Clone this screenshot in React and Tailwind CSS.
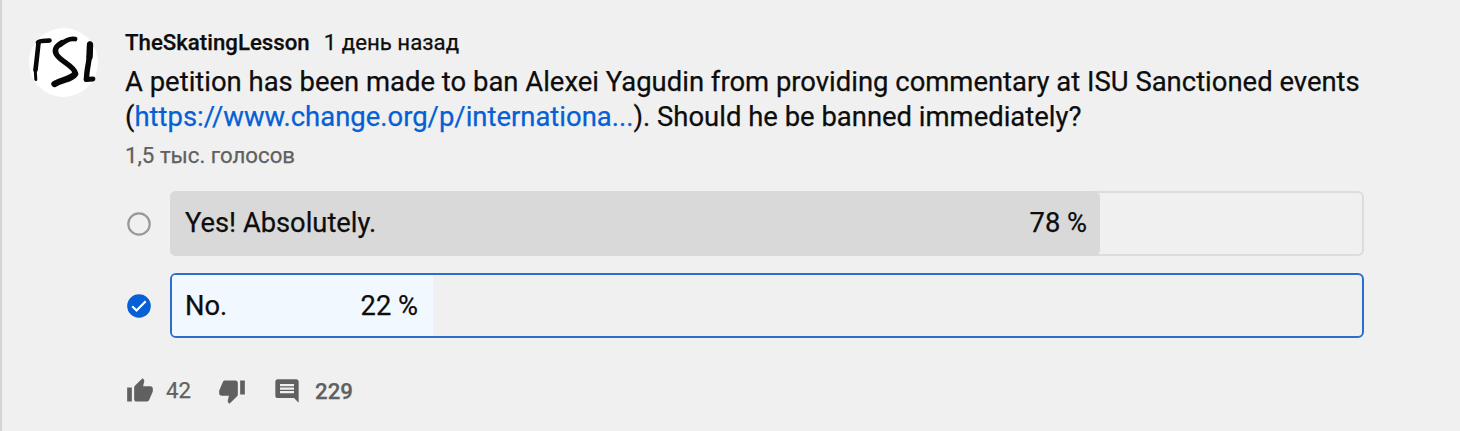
const LIKE =
  "M1 21h4V9H1v12zm22-11c0-1.100-.900-2-2-2h-6.310l.950-4.570.030-.320c0-.410-.170-.790-.440-1.060L14.170 1 7.590 7.590C7.220 7.950 7 8.450 7 9v10c0 1.100.900 2 2 2h9c.830 0 1.540-.500 1.840-1.220l3.020-7.050c.090-.230.140-.470.140-.730v-2z";
const DISLIKE =
  "M15 3H6c-.830 0-1.540.500-1.840 1.220l-3.020 7.050c-.090.230-.140.470-.140.730v2c0 1.100.900 2 2 2h6.310l-.950 4.570-.030.320c0 .410.170.790.440 1.060L9.830 23l6.590-6.590c.360-.360.580-.860.580-1.410V5c0-1.100-.900-2-2-2zm4 0v12h4V3h-4z";
const COMMENT =
  "M21.990 4c0-1.100-.890-2-1.990-2H4c-1.100 0-2 .900-2 2v12c0 1.100.900 2 2 2h14l4 4-.010-18zM18 14H6v-2h12v2zm0-3H6V9h12v2zm0-3H6V6h12v2z";

function Icon({ path, className }) {
  return (
    <svg viewBox="0 0 24 24" fill="#606060" className={"h-7 w-7 shrink-0 " + className}>
      <path d={path} />
    </svg>
  );
}

function Avatar() {
  return (
    <svg viewBox="0 0 70 70" className="h-[70px] w-[70px] shrink-0" role="img" aria-label="TheSkatingLesson">
      <circle cx="35.500" cy="35.500" r="34.500" fill="#fff" />
      <g fill="none" stroke="#080808" strokeLinecap="round" strokeLinejoin="round">
        <path d="M10 15.500C12 13 17 14 21.500 13.500" strokeWidth="4.600" />
        <path d="M10.500 16C9.500 26 8.500 34 7.500 43" strokeWidth="4.600" />
        <path d="M7.200 42L7.800 52.500" strokeWidth="3" />
        <path d="M47 12C42 11 37 13.500 32 18" strokeWidth="4.800" />
        <path d="M34 15.500C28 19 26 23 28.500 27.500C32 34 46 39 47.300 46" strokeWidth="5.400" />
        <path d="M47 47C43 52.500 35 52 26.500 57" strokeWidth="6.400" />
        <path d="M62 17C63.500 27 58.500 40 58.500 52" strokeWidth="5.400" />
        <path d="M62 18L61.500 30" strokeWidth="6.400" />
        <path d="M58 52.500L65 52" strokeWidth="4.800" />
      </g>
    </svg>
  );
}

function Radio({ checked }) {
  return (
    <svg viewBox="0 0 24 24" className="h-6 w-6 shrink-0">
      {checked ? (
        <>
          <circle cx="12" cy="12" r="11.800" fill="#065fd4" />
          <path d="M5.200 12.300L9.500 16.500L18.700 7.300" fill="none" stroke="#fff" strokeWidth="2.200" />
        </>
      ) : (
        <circle cx="12" cy="12" r="10.700" fill="none" stroke="#989898" strokeWidth="2.200" />
      )}
    </svg>
  );
}

export default function App() {
  return (
    <div className="flex h-[431px] w-[1460px] overflow-hidden border-l-2 border-[#d5d5d5] bg-[#f0f0f0] pt-[27px] pl-[26px] font-['Roboto',sans-serif] text-[#0d0d0d] [-webkit-text-stroke:0.25px]">
      <Avatar />
      <main className="ml-[27px] w-[1239px] shrink-0">
        <header className="flex h-8 items-center gap-[14px] text-[22.240px] whitespace-nowrap">
          <span className="font-medium">TheSkatingLesson</span>
          <span>1 день назад</span>
        </header>
        <p className="mt-[6px] text-[27.440px] leading-[34.500px] whitespace-nowrap">
          A petition has been made to ban Alexei Yagudin from providing commentary at ISU Sanctioned events
          <br />(<a className="text-[#065fd4]">https://www.change.org/p/internationa...</a>). Should he be banned immediately?
        </p>
        <p className="mt-[6px] text-[22.240px] leading-[30px] text-[#606060]">1,5 тыс. голосов</p>
        <div className="mt-[21px] flex items-center gap-[19px] pl-[2px]">
          <Radio />
          <div className="h-[65px] w-[1195px] rounded-md border-2 border-[#dcdcdc]">
            <div className="-m-[2px] flex h-[65px] w-[930px] items-center justify-between rounded-md bg-[#d9d9d9] pr-[13px] pl-[15px] text-[27.300px]">
              <span>Yes! Absolutely.</span>
              <span>78 %</span>
            </div>
          </div>
        </div>
        <div className="mt-[17px] flex items-center gap-[19px] pl-[2px]">
          <Radio checked />
          <div className="h-[65px] w-[1195px] rounded-md border-2 border-[#2c6ecb]">
            <div className="flex h-full w-[261px] items-center justify-between rounded-l-sm bg-[#f2f8ff] pt-px pr-[15px] pl-[13px] text-[27.300px]">
              <span>No.</span>
              <span>22 %</span>
            </div>
          </div>
        </div>
        <footer className="mt-[38px] flex h-[30px] items-center text-[22.240px] text-[#606060]">
          <Icon path={LIKE} className="ml-[0.5px]" />
          <span className="ml-[12.500px] w-[25px]">42</span>
          <Icon path={DISLIKE} className="ml-[27px]" />
          <Icon path={COMMENT} className="ml-[27px]" />
          <span className="ml-[14px] pt-[2px] font-medium">229</span>
        </footer>
      </main>
    </div>
  );
}
